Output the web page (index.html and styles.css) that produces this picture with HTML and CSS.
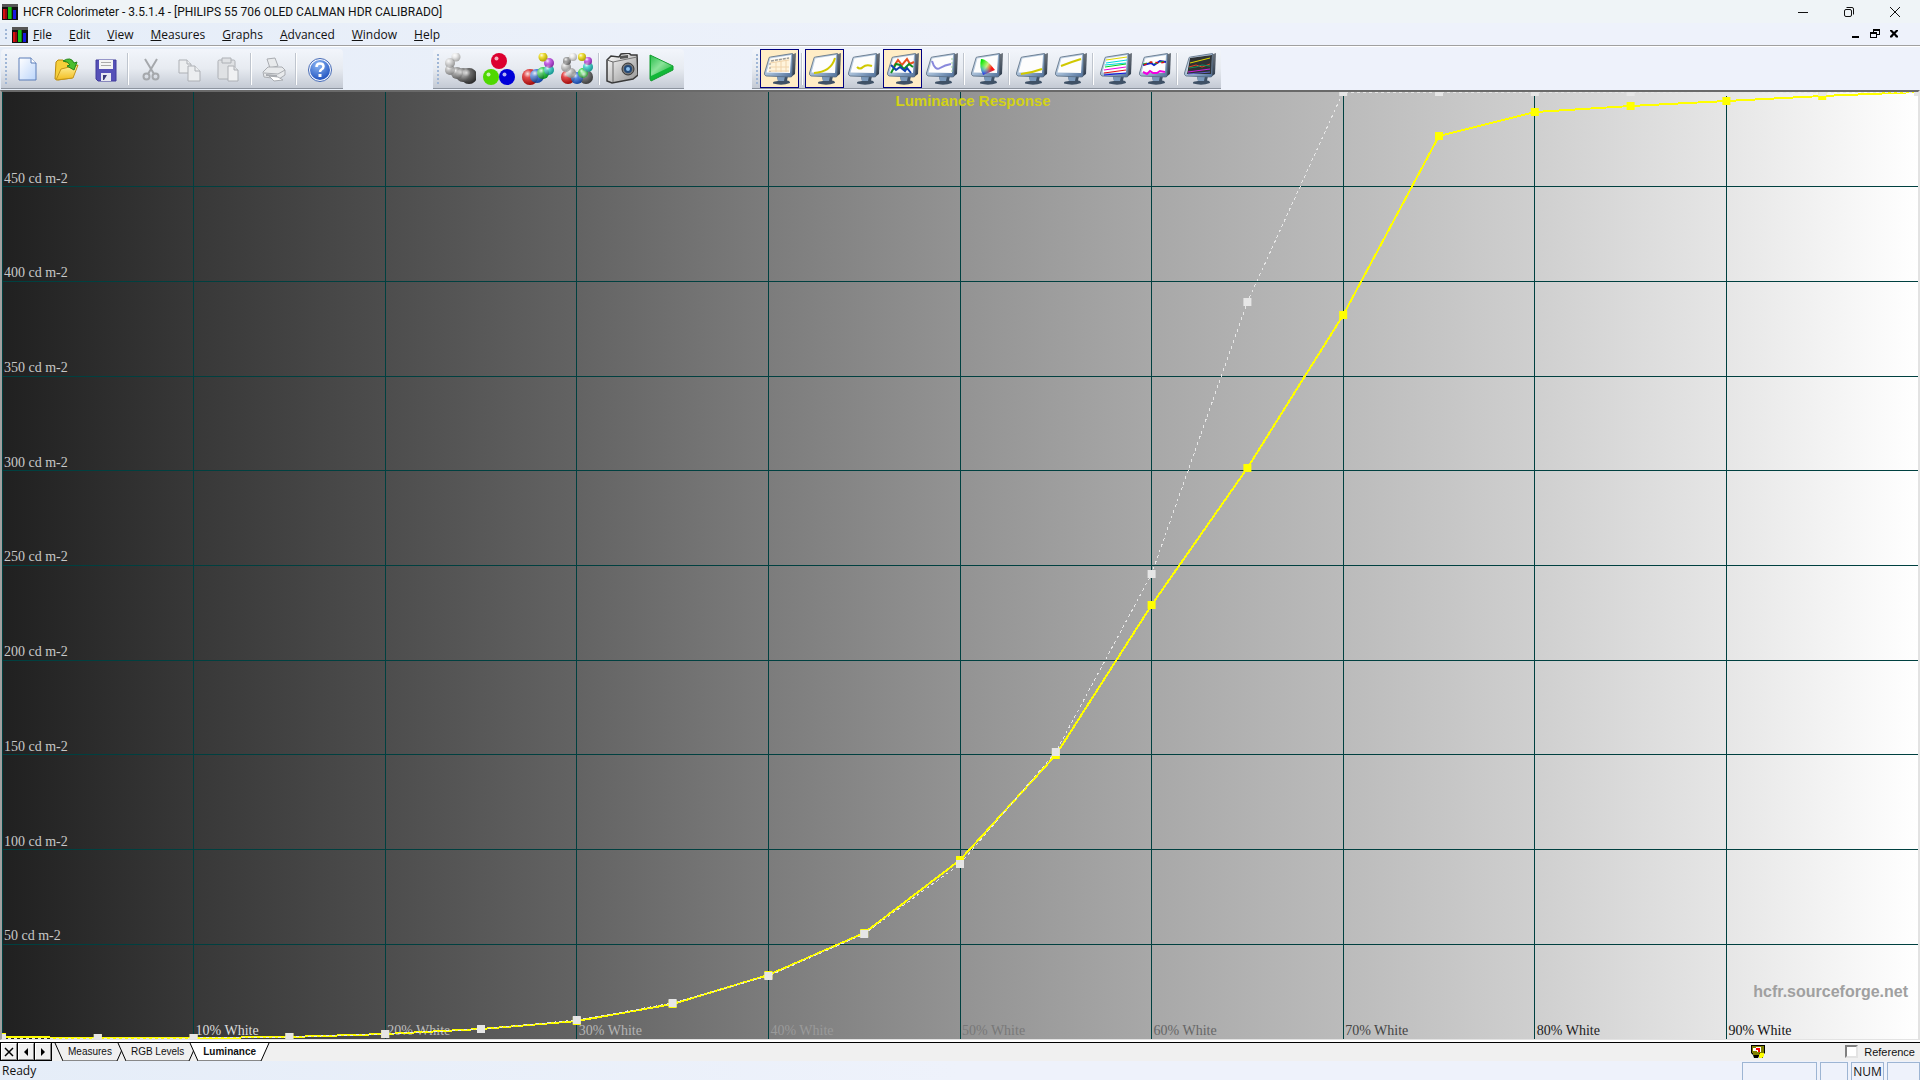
FILE: index.html
```html
<!DOCTYPE html>
<html lang="en">
<head>
<meta charset="utf-8">
<title>HCFR Colorimeter</title>
<link rel="stylesheet" href="styles.css">
</head>
<body>
<svg class="defs" aria-hidden="true">
  <defs>
    <linearGradient id="bezel" x1="0" y1="0" x2="1" y2="1"><stop offset="0" stop-color="#e4edf5"/><stop offset=".55" stop-color="#9db6d2"/><stop offset="1" stop-color="#4d6d98"/></linearGradient>
    <linearGradient id="side" x1="0" y1="0" x2="0" y2="1"><stop offset="0" stop-color="#6d747c"/><stop offset="1" stop-color="#2c3a4c"/></linearGradient>
    <linearGradient id="page" x1="0" y1="0" x2="1" y2="1"><stop offset="0" stop-color="#fff"/><stop offset="1" stop-color="#bcd6fb"/></linearGradient>
    <linearGradient id="folder" x1="0" y1="0" x2="0" y2="1"><stop offset="0" stop-color="#fff3a0"/><stop offset="1" stop-color="#f2bd20"/></linearGradient>
    <radialGradient id="help" cx=".4" cy=".25" r=".8"><stop offset="0" stop-color="#8db8f5"/><stop offset="1" stop-color="#1d4fbd"/></radialGradient>
    <radialGradient id="shine" cx=".35" cy=".3" r=".7"><stop offset="0" stop-color="#fff" stop-opacity=".9"/><stop offset=".35" stop-color="#fff" stop-opacity=".25"/><stop offset="1" stop-color="#000" stop-opacity=".25"/></radialGradient>
    <linearGradient id="play" x1="0" y1="0" x2="1" y2="1"><stop offset="0" stop-color="#2fc050"/><stop offset=".45" stop-color="#8be39a"/><stop offset="1" stop-color="#10b030"/></linearGradient>
    <linearGradient id="cam" x1="0" y1="0" x2="1" y2="1"><stop offset="0" stop-color="#fff"/><stop offset="1" stop-color="#8f8f8f"/></linearGradient>
    <linearGradient id="gamR" x1="0" y1="0" x2="1" y2=".7"><stop offset=".1" stop-color="#00e800"/><stop offset=".5" stop-color="#c8f080"/><stop offset=".8" stop-color="#ff1010"/></linearGradient>
    <linearGradient id="gamB" x1=".6" y1=".1" x2=".2" y2="1"><stop offset=".4" stop-color="#20d0ff" stop-opacity="0"/><stop offset="1" stop-color="#1020ff"/></linearGradient>
    <symbol id="monitor" viewBox="0 0 32 32">
      <path d="M9 29.500Q10 28 14 28L13 23H24L23 27.500Q26 27.500 26 30Q18 33 9 30.500Z" fill="#3f5166"/>
      <path d="M13 23H21L20 28H14Z" fill="#7c9abc"/>
      <path d="M28 1.500L32 0L31 21L27 24Z" fill="url(#side)"/>
      <path d="M5 5Q5 4 6.500 4L28.500 .5L28 23Q28 24 26 24L2 23Q0 22 .5 20Z" fill="url(#bezel)" stroke="#56697f" stroke-width=".8"/>
      <path d="M6.500 5.500L27 2L26 20L2.500 19.500Z" fill="#fdfdfd"/>
    </symbol>
    <symbol id="app" viewBox="0 0 16 16"><path d="M0 0H16V16H0Z" fill="#111"/><path d="M0 0H16V3H0Z" fill="#555"/><path d="M1 5H5V15H1Z" fill="#d81010"/><path d="M6 3H10V15H6Z" fill="#18c018"/><path d="M11 6H14V15H11Z" fill="#1818e0"/><path d="M3 5H5V15H3ZM9 3H10V15H9Z" fill="#000" opacity=".3"/></symbol>
  </defs>
</svg>

<div class="window">
  <header class="titlebar">
    <svg class="app-icon" viewBox="0 0 16 16"><use href="#app"/></svg>
    <h1 class="caption">HCFR Colorimeter - 3.5.1.4 - [PHILIPS 55 706 OLED CALMAN HDR CALIBRADO]</h1>
    <div class="win-controls">
      <button aria-label="Minimize"><svg viewBox="0 0 12 12"><path d="M1 6.500H11"/></svg></button>
      <button aria-label="Restore"><svg viewBox="0 0 12 12"><rect x="1.500" y="3.500" width="7" height="7" rx="1.500"/><path d="M3.500 1.500H9Q10.500 1.500 10.500 3V8.500"/></svg></button>
      <button aria-label="Close"><svg viewBox="0 0 12 12"><path d="M1 1L11 11M11 1L1 11"/></svg></button>
    </div>
  </header>

  <nav class="menubar">
    <i class="grip"></i>
    <svg class="app-icon" viewBox="0 0 16 16"><use href="#app"/></svg>
    <div class="menus">
      <button><u>F</u>ile</button><button><u>E</u>dit</button><button><u>V</u>iew</button><button><u>M</u>easures</button><button><u>G</u>raphs</button><button><u>A</u>dvanced</button><button><u>W</u>indow</button><button><u>H</u>elp</button>
    </div>
    <div class="mdi-controls">
      <button aria-label="Minimize document"><svg viewBox="0 0 10 10"><path d="M1 7H8V9H1Z"/></svg></button>
      <button aria-label="Restore document"><svg viewBox="0 0 10 10"><path d="M3 0H10V6H7V5H9V2H4V3H3ZM0 3H7V9H0ZM1 5V8H6V5Z" fill-rule="evenodd"/></svg></button>
      <button aria-label="Close document"><svg viewBox="0 0 10 10"><path d="M1 1H3L5 3L7 1H9V2L6.500 4.500L9 7V8.500H7L5 6L3 8.500H1V7L3.500 4.500L1 2Z"/></svg></button>
    </div>
  </nav>

  <div class="rebar">
    <div class="toolbar toolbar-main">
      <i class="grip"></i>
      <button aria-label="New"><svg viewBox="0 0 32 32"><path d="M7 5H19L24 10V27H7Z" fill="url(#page)" stroke="#5b7cb8"/><path d="M19 5V10H24" fill="#fff" stroke="#5b7cb8"/></svg></button>
      <button aria-label="Open"><svg viewBox="0 0 32 32"><path d="M4 26L5 9L7 7H12L14 9L20 9V13L24 14L21 25L7 27Z" fill="#f6cf3a" stroke="#b98a12"/><path d="M5 27L10 16L27 12L22 25Z" fill="url(#folder)" stroke="#c4951a"/><path d="M12 8Q20 3 23 10L26 9L23 17L16 13L19 12Q17 8 12 8Z" fill="#4cbf30" stroke="#23851a"/></svg></button>
      <button aria-label="Save"><svg viewBox="0 0 32 32"><path d="M6 7H26V28H8L6 26Z" fill="#5651b8" stroke="#403c9c"/><path d="M9 7H23V16H9Z" fill="#f4f4f4"/><path d="M11 9.500H21M11 12.500H21" stroke="#aaa"/><path d="M11 20H21V28H11Z" fill="#e8e8f0"/><path d="M13 22H17L14 27H13Z" fill="#3a3878"/></svg></button>
      <i class="sep"></i>
      <button aria-label="Cut" disabled><svg viewBox="0 0 32 32"><g fill="none" stroke="#a5a8ac" stroke-width="2"><path d="M10 6L19 21M22 6L13 21"/><circle cx="11.500" cy="23.500" r="3"/><circle cx="20.500" cy="23.500" r="3"/></g></svg></button>
      <button aria-label="Copy" disabled><svg viewBox="0 0 32 32"><g fill="#eceef0" stroke="#adb0b5"><path d="M5 7H13L17 11V20H5Z"/><path d="M13 7V11H17"/><path d="M14 13H21L26 18V28H14Z"/><path d="M21 13V18H26"/></g></svg></button>
      <button aria-label="Paste" disabled><svg viewBox="0 0 32 32"><g fill="#dfe1e4" stroke="#adb0b5"><rect x="5" y="7" width="17" height="19" rx="1.500"/><path d="M9 5H18V10H9Z"/><path d="M15 13H21L25 17V28H15Z" fill="#f0f1f3"/><path d="M21 13V17H25"/></g></svg></button>
      <i class="sep"></i>
      <button aria-label="Print" disabled><svg viewBox="0 0 32 32"><g fill="#e8eaec" stroke="#a9acb1"><path d="M12 15L9 6L17 5L20 13Z"/><path d="M5 19L10 14L24 14L27 17V22L21 26L6 24Z"/><path d="M6 20L20 21L27 17" fill="none"/><path d="M11 23L20 24L25 27L16 28Z" fill="#fff"/><path d="M8 22L19 23" stroke-width="2"/></g></svg></button>
      <i class="sep"></i>
      <button aria-label="Help"><svg viewBox="0 0 32 32"><circle cx="17" cy="17" r="11.500" fill="#f5f8ff" stroke="#4469b5"/><circle cx="17" cy="17" r="10" fill="url(#help)"/><path d="M13.500 14Q13.500 10.500 17 10.500Q20.500 10.500 20.500 13.500Q20.500 15.500 18.500 16.500Q17 17.500 17 19" fill="none" stroke="#fff" stroke-width="2.500"/><path d="M15.500 21H18.500V24H15.500Z" fill="#fff"/></svg></button>
    </div>

    <div class="toolbar toolbar-measure">
      <i class="grip"></i>
      <button aria-label="Measure gray scale"><svg viewBox="0 0 32 32"><g fill="#555"><circle cx="25" cy="23" r="8" fill="#3c3c3c"/><circle cx="19" cy="22" r="7" fill="#666"/><circle cx="13" cy="20" r="6" fill="#8a8a8a"/><circle cx="6" cy="17" r="5" fill="#b0b0b0"/><circle cx="6" cy="10" r="5" fill="#ccc"/><circle cx="12" cy="4" r="4.500" fill="#e6e6e6"/></g><g fill="url(#shine)"><circle cx="25" cy="23" r="8"/><circle cx="19" cy="22" r="7"/><circle cx="13" cy="20" r="6"/><circle cx="6" cy="17" r="5"/><circle cx="6" cy="10" r="5"/><circle cx="12" cy="4" r="4.500"/></g></svg></button>
      <button aria-label="Measure primaries"><svg viewBox="0 0 32 32"><circle cx="16" cy="8" r="8" fill="#dc0030"/><circle cx="8" cy="24" r="8" fill="#4fd800"/><circle cx="24" cy="24" r="8" fill="#0000d8"/><g fill="#fff" opacity=".7"><circle cx="13.500" cy="5.500" r="2"/><circle cx="5.500" cy="21.500" r="2"/><circle cx="21.500" cy="21.500" r="2"/></g></svg></button>
      <button aria-label="Measure saturations"><svg viewBox="0 0 32 32"><circle cx="8" cy="24" r="8" fill="#d81010"/><circle cx="15" cy="23" r="7" fill="#2060d8"/><circle cx="21" cy="20" r="6" fill="#10c830"/><circle cx="27" cy="17" r="5" fill="#20c8c0"/><circle cx="27" cy="10" r="5" fill="#b838e0"/><circle cx="21" cy="4" r="4.500" fill="#ecd800"/><g fill="url(#shine)"><circle cx="8" cy="24" r="8"/><circle cx="15" cy="23" r="7"/><circle cx="21" cy="20" r="6"/><circle cx="27" cy="17" r="5"/><circle cx="27" cy="10" r="5"/><circle cx="21" cy="4" r="4.500"/></g></svg></button>
      <button aria-label="Measure all"><svg viewBox="0 0 32 32"><circle cx="25" cy="24" r="7" fill="#555"/><circle cx="7" cy="24" r="7" fill="#d81010"/><circle cx="16" cy="25" r="6" fill="#2060d8"/><circle cx="22" cy="20" r="5" fill="#10d020"/><circle cx="10" cy="20" r="5" fill="#aaa"/><circle cx="27" cy="14" r="5" fill="#20c8c0"/><circle cx="5" cy="14" r="5" fill="#bbb"/><circle cx="27" cy="8" r="4" fill="#b838e0"/><circle cx="6" cy="8" r="4" fill="#888"/><circle cx="21" cy="4" r="4" fill="#ecd800"/><circle cx="12" cy="4" r="4" fill="#e8e8e8"/><g fill="url(#shine)"><circle cx="25" cy="24" r="7"/><circle cx="7" cy="24" r="7"/><circle cx="16" cy="25" r="6"/><circle cx="22" cy="20" r="5"/><circle cx="10" cy="20" r="5"/><circle cx="27" cy="14" r="5"/><circle cx="5" cy="14" r="5"/><circle cx="27" cy="8" r="4"/><circle cx="6" cy="8" r="4"/><circle cx="21" cy="4" r="4"/><circle cx="12" cy="4" r="4"/></g></svg></button>
      <i class="sep"></i>
      <button aria-label="Free measure"><svg viewBox="0 0 32 32"><path d="M1 7L5 3L13 4L15 1L23 0L25 2H31L32 22L27 26L6 30L1 28Z" fill="url(#cam)" stroke="#3a3a3a" stroke-width="1.500"/><path d="M1 7L7 9V29" fill="none" stroke="#666"/><path d="M7 9L31 4" stroke="#777"/><path d="M14 3L22 2V5L14 6Z" fill="#555"/><circle cx="22" cy="16" r="6" fill="#777" stroke="#333"/><circle cx="22" cy="16" r="4" fill="#244a78"/><circle cx="22" cy="16" r="2" fill="#8cc0ee"/></svg></button>
      <button aria-label="Continuous measure"><svg viewBox="0 0 32 32"><path d="M5 2L28 13V17L6 28L5 26Z" fill="#12b838" stroke="#159a30"/><path d="M6 3L27 13L6 23Z" fill="url(#play)"/></svg></button>
    </div>

    <div class="toolbar toolbar-views">
      <i class="grip"></i>
      <button class="checked" aria-label="Measures view"><svg viewBox="0 0 32 32"><use href="#monitor"/><path d="M6 7L26 4L25 19L4 19Z" fill="#fff4dc"/><path d="M6 10L25 7M6 14H25M5 18H25M12 9V19M17 8V19M22 7V19" stroke="#f0d4ac"/><path d="M7 8L25 5" stroke="#999" stroke-width="1.500" stroke-dasharray="3 1"/><path d="M6 10V19" stroke="#999" stroke-dasharray="2 2"/></svg></button>
      <i class="sep"></i>
      <button class="checked" aria-label="Luminance view"><svg viewBox="0 0 32 32"><use href="#monitor"/><path d="M5 20Q22 19 26 5" fill="none" stroke="#d0c800" stroke-width="2"/></svg></button>
      <button aria-label="Gamma view"><svg viewBox="0 0 32 32"><use href="#monitor"/><path d="M9 14Q12 17 15 14T24 13" fill="none" stroke="#d0c800" stroke-width="2"/></svg></button>
      <button class="checked" aria-label="RGB levels view"><svg viewBox="0 0 32 32"><use href="#monitor"/><g fill="none" stroke-width="2"><path d="M7 13L11 7L15 12L20 6L23 11L27 9" stroke="#e85020"/><path d="M4 20L9 11L13 12L17 16L22 11L26 14" stroke="#109020"/><path d="M4 12L9 17L13 14L18 18L20 15L24 20" stroke="#1040b0"/></g></svg></button>
      <button aria-label="Color temperature view"><svg viewBox="0 0 32 32"><use href="#monitor"/><path d="M6 8Q9 18 14 15T25 11" fill="none" stroke="#8888dc" stroke-width="2"/><path d="M26 5V20" stroke="#a0d0a0" stroke-dasharray="2 2"/></svg></button>
      <i class="sep"></i>
      <button aria-label="CIE chart view"><svg viewBox="0 0 32 32"><use href="#monitor"/><path d="M10 6Q15 5 24 17L12 22Q8 14 10 6Z" fill="url(#gamR)"/><path d="M10 6Q15 5 24 17L12 22Q8 14 10 6Z" fill="url(#gamB)"/></svg></button>
      <i class="sep"></i>
      <button aria-label="Near black view"><svg viewBox="0 0 32 32"><use href="#monitor"/><path d="M5 21Q15 20 26 16" fill="none" stroke="#d0c800" stroke-width="2"/></svg></button>
      <button aria-label="Near white view"><svg viewBox="0 0 32 32"><use href="#monitor"/><path d="M6 13Q16 9 26 6" fill="none" stroke="#d0c800" stroke-width="2"/></svg></button>
      <i class="sep"></i>
      <button aria-label="Saturation luminance view"><svg viewBox="0 0 32 32"><use href="#monitor"/><path d="M6 7L27 4" stroke="#e0d800"/><path d="M6 10L27 7M5 12L26 10" stroke="#00d8e0"/><path d="M5 14L26 11" stroke="#00d020"/><path d="M4 17L26 14" stroke="#f000e0"/><path d="M4 20L26 17" stroke="#e81010"/><path d="M4 22L26 20" stroke="#1010e0"/></svg></button>
      <button aria-label="Saturation shift view"><svg viewBox="0 0 32 32"><use href="#monitor"/><g fill="none"><path d="M4 12L12 10L15 12L21 8L27 9" stroke="#1020d0" stroke-width="2"/><path d="M4 11L12 9L15 11L21 9L27 8" stroke="#10b020" stroke-dasharray="4 2"/><path d="M5 12L12 9L21 10L26 9" stroke="#e01010" stroke-width="1.500" stroke-dasharray="3 3"/><path d="M4 19L8 21L11 18L14 20L18 20L21 18L26 19" stroke="#f000e0" stroke-width="2"/></g></svg></button>
      <i class="sep"></i>
      <button aria-label="Combined view"><svg viewBox="0 0 32 32"><use href="#monitor"/><path d="M6 5L28 2L27 21L3 21Z" fill="#2e3234"/><g fill="none"><path d="M6 10L26 5" stroke="#e0d800"/><path d="M5 14L12 12L18 14L26 11" stroke="#e84020"/><path d="M5 15L12 14L18 12L26 13" stroke="#109060"/><path d="M4 19L26 16" stroke="#d020e0"/><path d="M4 21L26 19" stroke="#6060d0"/></g></svg></button>
    </div>
  </div>

  <main class="chart">
    <svg class="layer" id="grid" aria-hidden="true"></svg>
    <div class="layer y-labels">
      <span></span><span>450 cd m-2</span><span>400 cd m-2</span><span>350 cd m-2</span><span>300 cd m-2</span><span>250 cd m-2</span><span>200 cd m-2</span><span>150 cd m-2</span><span>100 cd m-2</span><span>50 cd m-2</span>
    </div>
    <div class="layer x-labels">
      <span></span><span class="t1">10% White</span><span class="t2">20% White</span><span class="t3">30% White</span><span class="t4">40% White</span><span class="t5">50% White</span><span class="t6">60% White</span><span class="t7">70% White</span><span class="t8">80% White</span><span class="t9">90% White</span>
    </div>
    <svg class="layer" id="series" role="img" aria-label="Luminance response curve"></svg>
    <h2 class="layer chart-title">Luminance Response</h2>
    <p class="layer credit">hcfr.sourceforge.net</p>
  </main>

  <div class="tabbar">
    <div class="tab-nav">
      <button aria-label="Close view"><svg viewBox="0 0 10 10"><path d="M1 1L9 9M9 1L1 9" stroke="#000" stroke-width="1.500"/></svg></button>
      <button aria-label="Previous view"><svg viewBox="0 0 10 10"><path d="M7 1V9L3 5Z"/></svg></button>
      <button aria-label="Next view"><svg viewBox="0 0 10 10"><path d="M3 1V9L7 5Z"/></svg></button>
    </div>
    <div class="tabs">
      <button class="tab"><svg viewBox="0 0 8 18"><path class="face" d="M0 0H8V18Z"/><path class="edge" d="M0 0L8 18"/></svg><span>Measures</span><svg viewBox="0 0 8 18"><path class="face" d="M0 0H8L0 18Z"/><path class="edge" d="M8 0L0 18"/></svg></button>
      <button class="tab"><svg viewBox="0 0 8 18"><path class="face" d="M0 0H8V18Z"/><path class="edge" d="M0 0L8 18"/></svg><span>RGB Levels</span><svg viewBox="0 0 8 18"><path class="face" d="M0 0H8L0 18Z"/><path class="edge" d="M8 0L0 18"/></svg></button>
      <button class="tab active"><svg viewBox="0 0 8 18"><path class="face" d="M0 0H8V18Z"/><path class="edge" d="M0 0L8 18"/></svg><span>Luminance</span><svg viewBox="0 0 8 18"><path class="face" d="M0 0H8L0 18Z"/><path class="edge" d="M8 0L0 18"/></svg></button>
    </div>
    <svg class="probe" viewBox="0 0 14 14"><path d="M0 0H14V8L12 10V13H9L8 11L7 13H3L2 10L0 8Z" fill="#000"/><path d="M1 1H13V8H8V10H2V8H1Z" fill="#808000"/><path d="M2 3H5V2H10V7H6V6H2Z" fill="#fff"/><path d="M5 3H9V7H7V5H5Z" fill="#f00"/><path d="M9 8H13V11L11 13H8V10Z" fill="#ff0"/></svg>
    <label class="reference"><input type="checkbox">Reference</label>
  </div>

  <footer class="statusbar">
    <span class="ready">Ready</span>
    <span class="pane pane-wide"></span><span class="pane pane-caps"></span><span class="pane pane-num">NUM</span><span class="pane pane-scroll"></span>
  </footer>
</div>
<script src="chart.js"></script>
</body>
</html>
```
FILE: styles.css
```css
* { box-sizing: border-box; }
html, body { height: 100%; }
body { margin: 0; font-family: "Open Sans", "Noto Sans", sans-serif; font-size: 12px; color: #111; background: #eef2fb; }
button { margin: 0; padding: 0; border: 0; background: none; font: inherit; color: inherit; }
svg { display: block; flex: none; }
.defs { position: absolute; width: 0; height: 0; }

.window { display: flex; flex-direction: column; height: 100vh; overflow: hidden; }

.titlebar { display: flex; align-items: center; gap: 5px; height: 23px; padding-left: 2px; background: #eff4f7; }
.app-icon { width: 16px; height: 16px; }
.caption { flex: 1; margin: 0; font-family: Roboto, sans-serif; font-size: 12px; font-weight: 400; line-height: 16px; white-space: nowrap; }
.win-controls { display: flex; gap: 34px; padding-right: 19px; }
.win-controls svg { width: 12px; height: 12px; fill: none; stroke: #111; }

.menubar { display: flex; align-items: center; height: 24px; padding-left: 5px; background: linear-gradient(90deg, #e5edf8, #eef2fb 50%); border-bottom: 1px solid #fff; box-shadow: inset 0 -1px #a0a0a0; }
.menubar .app-icon { margin: 0 5px; }
.menus { display: flex; flex: 1; gap: 17px; line-height: 16px; }
.mdi-controls { display: flex; gap: 9px; padding: 0 21px 2px 0; }
.mdi-controls svg { width: 10px; height: 10px; }
.grip { flex: none; width: 2px; background: repeating-linear-gradient(#9fb6d6 0 2px, transparent 2px 4px); }
.menubar .grip { height: 12px; }

.rebar { display: flex; height: 43px; padding: 2px 0 1px 1px; background: linear-gradient(90deg, #e5edf8, #eef2fb 50%); }
.toolbar { display: flex; align-items: center; height: 40px; border-radius: 4px 4px 0 0; background: linear-gradient(#f2f5fb, #e7ebf1 50%, #c4cad4); border-bottom: 1px solid #8c939e; }
.toolbar-main { margin-right: 90px; padding-right: 5px; }
.toolbar-measure { margin-right: 68px; padding-right: 4px; }
.toolbar-views { padding-right: 2px; }
.toolbar .grip { height: 30px; margin: 0 1px 0 4px; }
.toolbar-views .grip { margin-right: 2px; }
.toolbar button { display: flex; align-items: center; justify-content: center; width: 39px; height: 39px; }
.toolbar button svg { width: 32px; height: 32px; }
.toolbar .checked { border: 1px solid #000080; background: #ffedc6; }
.sep { flex: none; width: 6px; height: 32px; background: linear-gradient(#bfc5ce, #bfc5ce) 2px 0 / 1px 100% no-repeat, linear-gradient(#fff, #fff) 3px 0 / 1px 100% no-repeat; }

.chart {
  flex: 1; display: grid; min-height: 0; overflow: hidden;
  border: solid; border-width: 2px 2px 1px; border-color: #696969 #e3e3e3 #e3e3e3 #a0a0a0;
  background: linear-gradient(90deg, #202020, #383838 10%, #4d4d4d 20%, #636363 30%, #7c7c7c 40%, #939393 50%, #a8a8a8 60%, #bbb 70%, #cfcfcf 80%, #e6e6e6 90%, #fff);
}
.layer { grid-area: 1 / 1; width: 100%; height: 100%; min-width: 0; min-height: 0; }
#grid line { stroke: #004040; shape-rendering: crispEdges; }
.y-labels, .x-labels { display: grid; font-family: "Liberation Serif", serif; font-size: 14px; line-height: 16px; }
.y-labels { grid-template-rows: repeat(10, 1fr); align-items: start; color: #c8c8c8; padding-left: 2px; }
.y-labels span { margin-top: -16px; }
.x-labels { grid-template-columns: repeat(10, 1fr); align-items: end; }
.x-labels span { padding-left: 2px; }
.t1 { color: #dcdcdc; }
.t2 { color: #bcbcbc; }
.t3 { color: #b4b4b4; }
.t4 { color: #9a9a9a; }
.t5 { color: #787878; }
.t6 { color: #666; }
.t7 { color: #444; }
.t8 { color: #222; }
.t9 { color: #111; }
.measured { fill: none; stroke: #ff0; stroke-width: 2; vector-effect: non-scaling-stroke; shape-rendering: crispEdges; }
.target { fill: none; stroke: #e6e6e6; stroke-dasharray: 3 3; vector-effect: non-scaling-stroke; shape-rendering: crispEdges; }
.mark-measured { fill: #ff0; }
.mark-target { fill: #e6e6e6; }
.chart-title { margin: 0; padding-left: 26px; font: bold 15px/18px "Liberation Sans", sans-serif; color: #d2d214; text-align: center; }
.credit { margin: 0; padding: 0 10px 38px 0; align-self: end; height: auto; font: bold 16px/18px "Liberation Sans", sans-serif; color: #a0a0a0; text-align: right; }

.tabbar { display: flex; align-items: center; height: 21px; border-top: 2px solid #fff; background: #f0f0f0; box-shadow: inset 0 1px #000; font-family: "Liberation Sans", sans-serif; font-size: 11px; }
.tab-nav { display: flex; align-self: stretch; padding: 1px; gap: 1px; background: #000; }
.tab-nav button { display: flex; align-items: center; justify-content: center; width: 16px; background: #f0f0f0; border: 1px solid; border-color: #fff #888 #888 #fff; }
.tab-nav svg { width: 10px; height: 10px; }
.tabs { display: flex; flex: 1; align-self: stretch; padding: 1px 0 0 3px; font-size: 10px; }
.tab { display: flex; height: 18px; margin-right: -7px; line-height: 17px; }
.tab svg { width: 8px; height: 18px; overflow: visible; }
.tab span { padding: 0 5px; background: #f0f0f0; border-bottom: 1px solid #888; }
.face { fill: #f0f0f0; }
.edge { fill: none; stroke: #000; }
.active { font-weight: 700; }
.active span { background: #fff; }
.active .face { fill: #fff; }
.probe { width: 14px; height: 14px; margin-right: 80px; }
.reference { display: flex; align-items: center; gap: 6px; padding-right: 5px; }
.reference input { appearance: none; width: 13px; height: 13px; margin: 0; border: 2px solid; border-color: #808080 #e3e3e3 #e3e3e3 #808080; background: #fff; }

.statusbar { display: flex; gap: 3px; height: 19px; padding-top: 1px; line-height: 18px; background: linear-gradient(90deg, #e5edf8, #eef2fb 50%); }
.ready { flex: 1; padding-left: 2px; }
.pane { border: 1px solid #9db5d3; border-bottom: 0; }
.pane-wide { width: 75px; }
.pane-caps { width: 28px; }
.pane-num { width: 33px; text-align: center; }
.pane-scroll { width: 33px; }
```
FILE: chart.js
```js
// Readings every 5% of white, as a height from the top of the plot (947 units tall, 500 cd/m2).
const H = 947, W = 1916;
const measured = [945, 946, 946, 945, 942, 937, 929, 912, 883, 841, 768, 663, 513, 376, 223, 44, 20, 14, 9, 4, 0];
const target = [946, 946, 946, 945, 942, 937, 928, 911, 884, 842, 772, 660, 482, 210, 0, 0, 0, 0, 0, 0, 0];
const NS = 'http://www.w3.org/2000/svg';

function add(parent, name, attrs) {
  const el = document.createElementNS(NS, name);
  for (const key in attrs) el.setAttribute(key, attrs[key]);
  parent.appendChild(el);
  return el;
}

const grid = document.getElementById('grid');
for (let i = 0; i < 10; i++) {
  const p = i * 10 + '%';
  add(grid, 'line', { x1: p, x2: p, y1: 0, y2: '100%' });
  if (i) add(grid, 'line', { x1: 0, x2: '100%', y1: p, y2: p });
}

const series = document.getElementById('series');
const curves = add(series, 'svg', { width: '100%', height: '100%', viewBox: `0 0 ${W} ${H}`, preserveAspectRatio: 'none' });
for (const [name, data] of [['measured', measured], ['target', target]]) {
  const points = data.map((y, i) => `${i * W / 20},${y}`).join(' ');
  add(curves, 'polyline', { class: name, points });
  data.forEach((y, i) => {
    add(series, 'rect', { class: 'mark-' + name, x: i * 5 + '%', y: y / H * 100 + '%', width: 8, height: 8, transform: 'translate(-4 -4)' });
  });
}
```
